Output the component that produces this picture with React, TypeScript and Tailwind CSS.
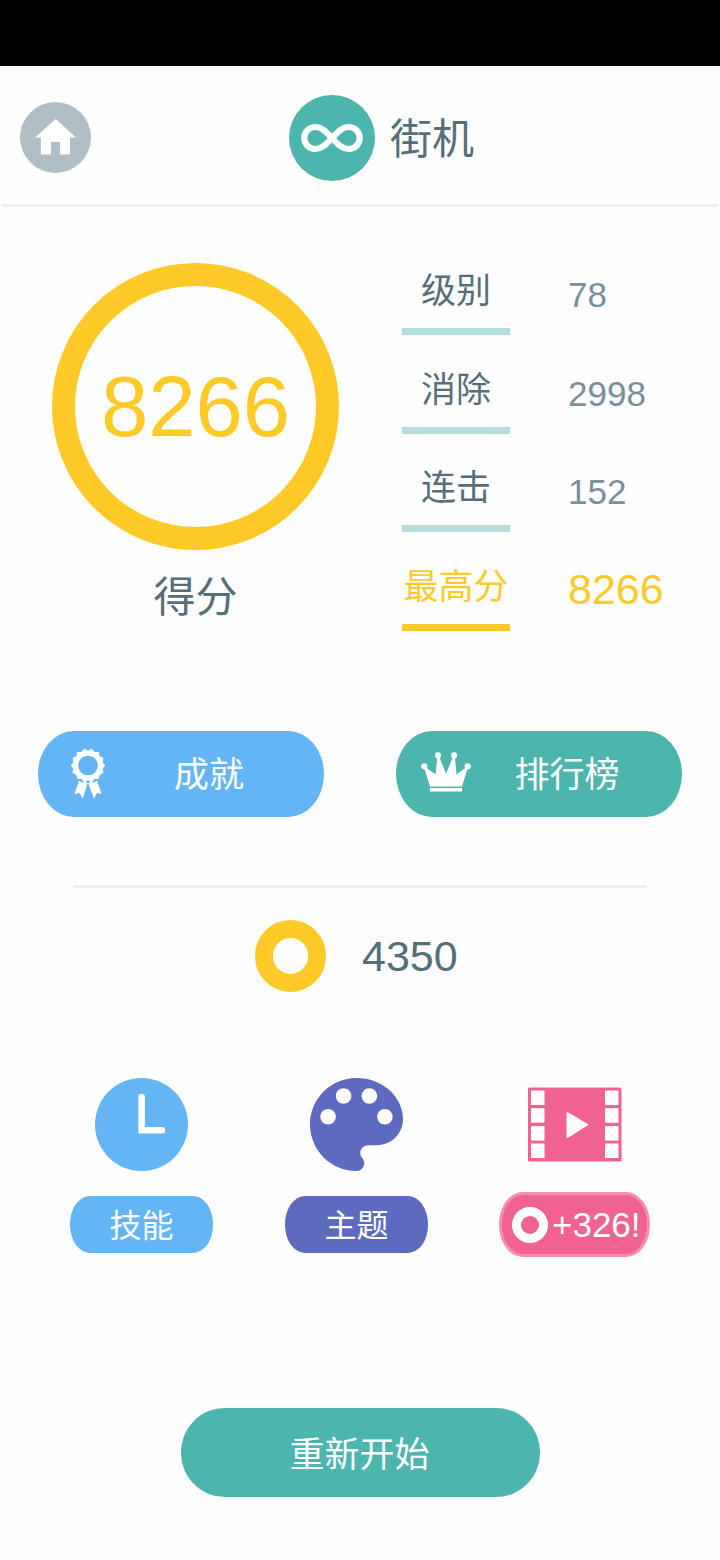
import React from 'react';

const stats = [
  { label: '级别', value: '78', best: false },
  { label: '消除', value: '2998', best: false },
  { label: '连击', value: '152', best: false },
  { label: '最高分', value: '8266', best: true },
];

// 14 scallops around the ribbon badge
const badgePoints = Array.from({ length: 28 }, (_, i) => {
  const r = i % 2 === 0 ? 17.2 : 15;
  const a = ((i + 1) / 28) * Math.PI * 2;
  return `${(18 + r * Math.sin(a)).toFixed(2)},${(17.5 - r * Math.cos(a)).toFixed(2)}`;
}).join(' ');

export default function App() {
  return (
    <div className="w-[720px] h-[1560px] bg-[#fefefe] overflow-hidden flex flex-col font-['Liberation_Sans','Noto_Sans_CJK_SC',sans-serif] text-[#546e7a]">
      {/* Status bar */}
      <div className="h-[66px] shrink-0 bg-black" />

      {/* Header */}
      <header className="h-[141px] shrink-0 mx-[2px] border-b-[3px] border-[#ebedf1] grid grid-cols-[287px_1fr] items-start">
        <button className="mt-[36px] ml-[18px] w-[71px] h-[71px] rounded-full bg-[#b0bec5]">
          <HomeIcon />
        </button>
        <div className="mt-[28.5px] flex items-center gap-[15px]">
          <div className="w-[86px] h-[86px] rounded-full bg-[#4db6ac]">
            <InfinityIcon />
          </div>
          <h1 className="pt-[4px] text-[42px] leading-[60px]">街机</h1>
        </div>
      </header>

      {/* Score + stats */}
      <section className="h-[523.5px] shrink-0 flex items-start pl-[52px]">
        <div className="mt-[55.5px] w-[287px] flex flex-col items-center">
          <div className="w-[287px] h-[287px] rounded-full border-[23px] border-[#ffca28] text-[#ffca28] flex items-center justify-center">
            <span className="pt-[2px] text-[85px] leading-[96px]">8266</span>
          </div>
          <span className="mt-[18px] text-[42px] leading-[60px]">得分</span>
        </div>
        <div className="mt-[57px] ml-[63px]">
          {stats.map((s) => (
            <div key={s.label} className="h-[98.6px] flex items-start gap-[58px]">
              <div className={`w-[108px] h-[71px] pt-[1px] border-b-[7px] text-center whitespace-nowrap text-[35px] leading-[52px] ${
                s.best ? 'border-[#ffca28] text-[#ffca28]' : 'border-[#b2dfdb]'
              }`}>
                {s.label}
              </div>
              <span className={s.best ? '-mt-[1px] text-[43px] leading-[60px] text-[#ffca28]' : 'mt-[1px] text-[35px] leading-[60px] text-[#78909c]'}>
                {s.value}
              </span>
            </div>
          ))}
        </div>
      </section>

      {/* Achievements / leaderboard */}
      <section className="shrink-0 flex gap-[72px] px-[38px] text-white text-[35px]">
        <button className="w-[286px] h-[86px] rounded-[36px/43px] bg-[#64b5f6] flex items-center">
          <RibbonIcon />
          <span className="ml-[68px] pt-[3px] leading-[52px]">成就</span>
        </button>
        <button className="w-[286px] h-[86px] rounded-[36px/43px] bg-[#4db6ac] flex items-center">
          <CrownIcon />
          <span className="ml-[43.5px] pt-[3px] leading-[52px]">排行榜</span>
        </button>
      </section>

      <div className="shrink-0 mt-[68px] mx-[73px] h-[3px] bg-[#eeeeee]" />

      {/* Coins */}
      <section className="shrink-0 mt-[32.5px] ml-[254.5px] h-[72px] flex items-center gap-[36px]">
        <div className="w-[71.5px] h-[71.5px] rounded-full border-[18px] border-[#ffca28]" />
        <span className="text-[43px] leading-[60px]">4350</span>
      </section>

      {/* Skills, themes, video reward */}
      <section className="shrink-0 mt-[85.5px] ml-[70px] flex items-start gap-[72px] text-white text-[32px]">
        <div className="w-[143px] flex flex-col items-center">
          <ClockIcon />
          <button className="mt-[25px] w-[143px] h-[57px] pt-[2px] rounded-[20px/28px] bg-[#64b5f6] leading-[57px]">技能</button>
        </div>
        <div className="w-[143px] flex flex-col items-center">
          <PaletteIcon />
          <button className="mt-[25px] w-[143px] h-[57px] pt-[2px] rounded-[20px/28px] bg-[#5c6bc0] leading-[57px]">主题</button>
        </div>
        <div className="-ml-[1px] w-[151px] flex flex-col items-center">
          <FilmIcon />
          <button className="mt-[20.5px] w-[151px] h-[65px] rounded-[24px/32px] bg-[#f06292] border-[3px] border-[#f48fb1] flex items-center pl-[10px]">
            <span className="w-[36px] h-[36px] shrink-0 rounded-full border-[9px] border-white" />
            <span className="ml-[4px] text-[35px] leading-[52px]">+326!</span>
          </button>
        </div>
      </section>

      <button className="shrink-0 self-center mt-[150.5px] w-[359px] h-[89px] rounded-[44px] bg-[#4db6ac] text-white text-[35px] leading-[89px] pt-[2px] pr-[1px]">
        重新开始
      </button>
    </div>
  );
}

function HomeIcon() {
  return (
    <svg className="block" width="71" height="71" viewBox="0 0 71 71" fill="white">
      <path d="M35.7 17 56 35.6H50V52.5H40V40H31V52.5H20.8V35.6H15z" />
    </svg>
  );
}

function InfinityIcon() {
  return (
    <svg className="block" width="86" height="86" viewBox="0 0 86 86" fill="none" stroke="white" strokeWidth="6.2">
      <path d="M43 43C37.3 37.1 33.3 32 26.3 32A11 11 0 0 0 26.3 54C33.3 54 37.3 48.9 43 43C48.7 37.1 52.7 32 59.7 32A11 11 0 0 1 59.7 54C52.7 54 48.7 48.9 43 43z" />
    </svg>
  );
}

function RibbonIcon() {
  return (
    <svg className="ml-[32px]" width="36" height="51" viewBox="0 0 36 51" fill="white">
      <path fillRule="evenodd" d={`M${badgePoints.split(' ').join('L')}zM27.8 17.5a9.8 9.8 0 1 0-19.6 0a9.8 9.8 0 1 0 19.6 0z`} />
      <path d="M9 32.5 12.5 34.5 15.5 33.2 17.7 35.2 12.7 50.5 9.5 45 4.5 46z" />
      <path d="M27 32.5 23.5 34.5 20.5 33.2 18.3 35.2 24 50.5 27 45 31.5 46z" />
    </svg>
  );
}

function CrownIcon() {
  return (
    <svg className="-mt-[4px] ml-[25px]" width="50" height="40" viewBox="0 0 50 40" fill="white">
      <circle cx="3.3" cy="14.3" r="3.1" />
      <circle cx="17" cy="3.4" r="3.1" />
      <circle cx="33.2" cy="3.4" r="3.1" />
      <circle cx="46.7" cy="14.3" r="3.1" />
      <path d="M4.5 15 14.5 22.5 16.5 4H18L25 21.8 32.3 4H33.8L35.5 22.5 45.5 15 46.8 16 41 34.5H9L3.2 16zM9 36H41V39.5H9z" />
    </svg>
  );
}

function ClockIcon() {
  return (
    <svg width="93" height="93" viewBox="0 0 93 93">
      <circle cx="46.5" cy="46.5" r="46.5" fill="#64b5f6" />
      <path d="M46.6 19V52.3H67" fill="none" stroke="white" strokeWidth="6.6" strokeLinecap="round" />
    </svg>
  );
}

function PaletteIcon() {
  return (
    <svg width="93" height="93" viewBox="3 3 18 18" fill="#5c6bc0">
      <path d="M12 3c-4.97 0-9 4.03-9 9s4.03 9 9 9c.83 0 1.5-.67 1.5-1.5 0-.39-.15-.74-.39-1.01-.23-.26-.38-.61-.38-.99 0-.83.67-1.5 1.5-1.5H16c2.76 0 5-2.24 5-5 0-4.42-4.03-8-9-8zm-5.5 9c-.83 0-1.5-.67-1.5-1.5S5.67 9 6.5 9 8 9.67 8 10.5 7.33 12 6.5 12zm3-4C8.67 8 8 7.33 8 6.5S8.67 5 9.5 5s1.5.67 1.5 1.5S10.33 8 9.5 8zm5 0c-.83 0-1.5-.67-1.5-1.5S13.67 5 14.5 5s1.5.67 1.5 1.5S15.33 8 14.5 8zm3 4c-.83 0-1.5-.67-1.5-1.5S16.67 9 17.5 9s1.5.67 1.5 1.5-.67 1.5-1.5 1.5z" />
    </svg>
  );
}

function FilmIcon() {
  const rows = [3, 20.7, 38.6, 56];
  return (
    <svg width="94" height="94" viewBox="0 0 94 94">
      <rect x="0" y="9.5" width="93.5" height="74" rx="1.5" fill="#f06292" />
      <g fill="white">
        {rows.map((y) => (
          <React.Fragment key={y}>
            <rect x="3" y={y + 9.5} width="13.5" height="14.5" />
            <rect x="77" y={y + 9.5} width="13.5" height="14.5" />
          </React.Fragment>
        ))}
      </g>
      <path d="M39.5 35 59 46.7 39.5 58.8z" fill="white" stroke="white" strokeWidth="2" strokeLinejoin="round" />
    </svg>
  );
}
